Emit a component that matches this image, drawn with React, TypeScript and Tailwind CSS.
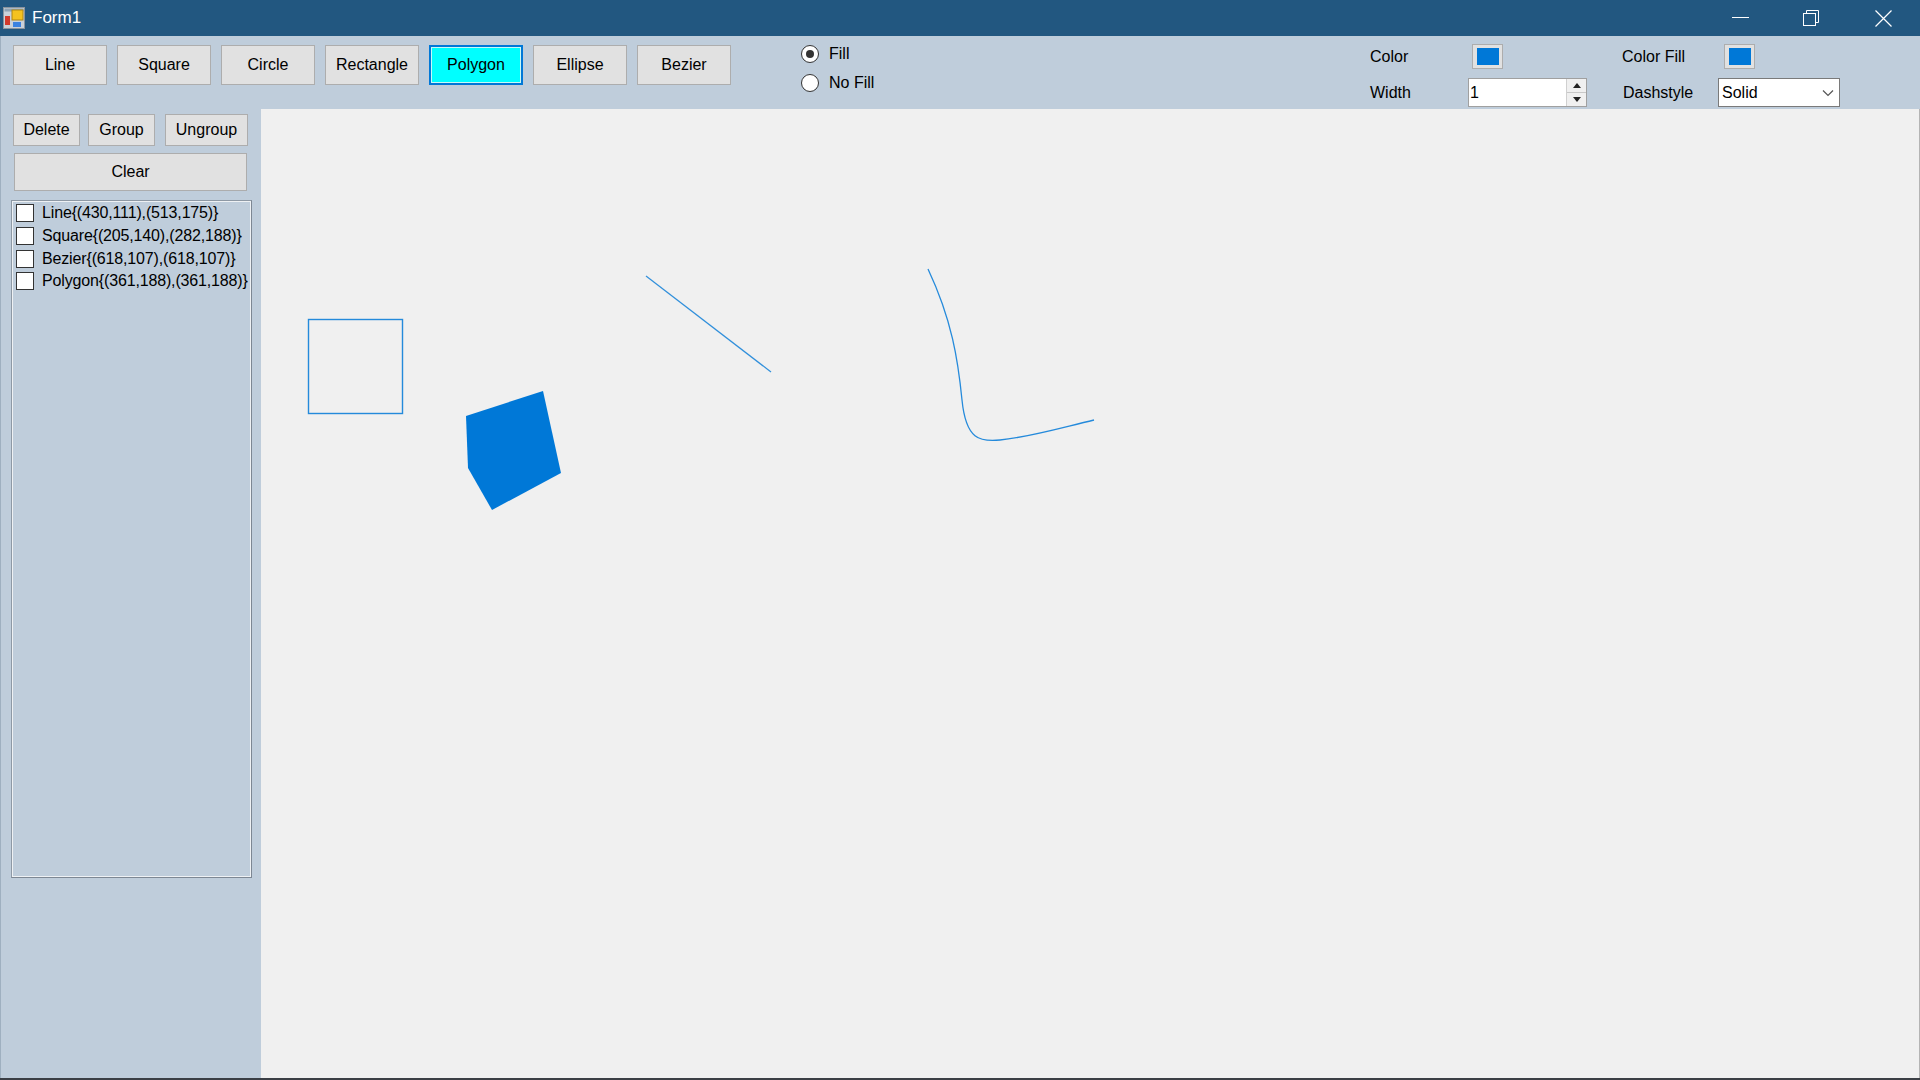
import React from 'react';

const tools = ['Line', 'Square', 'Circle', 'Rectangle', 'Polygon', 'Ellipse', 'Bezier'];

const shapes = [
    'Line{(430,111),(513,175)}',
    'Square{(205,140),(282,188)}',
    'Bezier{(618,107),(618,107)}',
    'Polygon{(361,188),(361,188)}',
];

const btn = 'flex items-center justify-center bg-[#e1e1e1] border border-[#adadad] text-black text-[16px]';

const Radio: React.FC<{ label: string; checked?: boolean }> = ({ label, checked }) => (
    <div className="flex items-center h-[20px]">
        <div className="w-[18px] h-[18px] rounded-full bg-white border border-[#333] flex items-center justify-center">
            {checked && <div className="w-[8px] h-[8px] rounded-full bg-[#333]" />}
        </div>
        <span className="ml-[10px] text-[16px] text-black">{label}</span>
    </div>
);

const Swatch: React.FC = () => (
    <div className="w-[31px] h-[25px] bg-[#e1e1e1] border border-[#adadad] flex items-center justify-center">
        <div className="w-[22px] h-[17px] bg-[#0078d7]" />
    </div>
);

export default function App() {
    return (
        <div className="w-[1920px] h-[1080px] flex flex-col overflow-hidden font-['Liberation_Sans',Arial,sans-serif] bg-[#bfcddb]">
            {/* Title bar */}
            <div className="h-[36px] bg-[#225780] flex items-center text-white shrink-0">
                <svg className="ml-[3px]" width="22" height="22" viewBox="0 0 22 22">
                    <rect x="0.5" y="0.5" width="21" height="21" fill="#c9d1d9" stroke="#8a949e" />
                    <rect x="1.5" y="1.5" width="19" height="3" fill="#8ea2b4" />
                    <rect x="9" y="3" width="11" height="10" fill="#f4c21f" stroke="#b08610" />
                    <rect x="2" y="9" width="5" height="9" fill="#d23a2c" />
                    <rect x="10" y="15" width="8" height="5" fill="#3b82e0" />
                </svg>
                <span className="ml-[7px] text-[17px]">Form1</span>
                <div className="ml-auto flex items-center h-full">
                    <svg className="mr-[53px]" width="18" height="18" viewBox="0 0 18 18">
                        <line x1="0" y1="8.5" x2="17" y2="8.5" stroke="white" strokeWidth="1" />
                    </svg>
                    <svg className="mr-[55px]" width="17" height="17" viewBox="0 0 17 17">
                        <rect x="0.5" y="3.5" width="12" height="12" fill="none" stroke="white" />
                        <path d="M3.5 3.5 V0.5 H15.5 V12.5 H12.5" fill="none" stroke="white" />
                    </svg>
                    <svg className="mr-[28px]" width="17" height="17" viewBox="0 0 17 17">
                        <path d="M0.5 0.5 L16.5 16.5 M16.5 0.5 L0.5 16.5" stroke="white" strokeWidth="1.2" />
                    </svg>
                </div>
            </div>

            {/* Toolbar */}
            <div className="h-[73px] flex items-start shrink-0 border-l border-[#9fb0c0]">
                <div className="flex gap-[10px] ml-[12px] mt-[9px]">
                    {tools.map((t) =>
                        t === 'Polygon' ? (
                            <div key={t} className="w-[94px] h-[40px] border-2 border-[#0078d7] bg-[#00ffff] flex items-center justify-center text-[16px] text-black">
                                <div className="w-full h-full border border-[#c8f8f8] flex items-center justify-center">{t}</div>
                            </div>
                        ) : (
                            <div key={t} className={`${btn} w-[94px] h-[40px]`}>{t}</div>
                        )
                    )}
                </div>
                <div className="flex flex-col gap-[9px] ml-[70px] mt-[8px]">
                    <Radio label="Fill" checked />
                    <Radio label="No Fill" />
                </div>
                <div className="ml-auto mr-[80px] flex flex-col text-[16px] text-black">
                    <div className="flex items-center h-[25px] mt-[8px]">
                        <span className="w-[102px]">Color</span>
                        <Swatch />
                        <span className="w-[119px]" />
                        <span className="w-[102px]">Color Fill</span>
                        <Swatch />
                    </div>
                    <div className="flex items-center h-[29px] mt-[9px]">
                        <span className="w-[98px]">Width</span>
                        <div className="w-[119px] h-[29px] bg-white border border-[#a0a0a0] flex items-center">
                            <span className="pl-[1px] flex-1">1</span>
                            <div className="w-[20px] h-full flex flex-col border-l border-[#d0d0d0] bg-[#f0f0f0]">
                                <div className="flex-1 flex items-center justify-center border-b border-[#c8c8c8]">
                                    <svg width="8" height="5" viewBox="0 0 8 5"><path d="M0 5 L4 0 L8 5 Z" fill="#222" /></svg>
                                </div>
                                <div className="flex-1 flex items-center justify-center">
                                    <svg width="8" height="5" viewBox="0 0 8 5"><path d="M0 0 L4 5 L8 0 Z" fill="#222" /></svg>
                                </div>
                            </div>
                        </div>
                        <span className="w-[36px]" />
                        <span className="w-[95px]">Dashstyle</span>
                        <div className="w-[122px] h-[29px] bg-white border border-[#7a7a7a] flex items-center">
                            <span className="pl-[3px] flex-1">Solid</span>
                            <svg className="mr-[5px]" width="12" height="8" viewBox="0 0 12 8">
                                <path d="M1 1.5 L6 6.5 L11 1.5" fill="none" stroke="#555" strokeWidth="1.2" />
                            </svg>
                        </div>
                    </div>
                </div>
            </div>

            {/* Body */}
            <div className="flex-1 flex min-h-0">
                <div className="w-[261px] shrink-0 flex flex-col border-l border-[#9fb0c0] pt-[5px]">
                    <div className="flex">
                        <div className={`${btn} ml-[12px] w-[67px] h-[32px]`}>Delete</div>
                        <div className={`${btn} ml-[8px] w-[67px] h-[32px]`}>Group</div>
                        <div className={`${btn} ml-[10px] w-[83px] h-[32px]`}>Ungroup</div>
                    </div>
                    <div className={`${btn} ml-[13px] mt-[7px] w-[233px] h-[38px]`}>Clear</div>
                    <div className="ml-[10px] mt-[9px] w-[241px] h-[678px] border border-[#8e99a5] border-r-[#7d8793] border-b-[#7d8793]">
                        <div className="w-full h-full border border-[#eef1f4]">
                            {shapes.map((s) => (
                                <div key={s} className="flex items-center h-[22.67px] text-[16px] text-black tracking-[-0.15px] whitespace-nowrap">
                                    <div className="ml-[3px] w-[18px] h-[18px] bg-white border border-[#333]" />
                                    <span className="ml-[8px]">{s}</span>
                                </div>
                            ))}
                        </div>
                    </div>
                </div>

                {/* Canvas */}
                <div className="flex-1 relative bg-[#f0f0f0] border-r border-[#b4b4b4]">
                    <svg className="absolute inset-0" width="100%" height="100%">
                        <g transform="translate(-261,-109)">
                            <rect x="308.5" y="319.5" width="94" height="94" fill="none" stroke="#0078d7" strokeWidth="1.4" opacity="0.85" />
                            <polygon points="466,416 543,391 561,473 492,510 468,468" fill="#0078d7" />
                            <line x1="646" y1="276" x2="771" y2="372" stroke="#0078d7" strokeWidth="1.2" opacity="0.8" />
                            <path
                                d="M928 269 C952 320, 958 360, 962 400 C966 440, 980 442, 1000 440 C1030 437, 1060 428, 1094 420"
                                fill="none"
                                stroke="#0078d7"
                                strokeWidth="1.3"
                                opacity="0.85"
                            />
                        </g>
                    </svg>
                </div>
            </div>
            <div className="h-[2px] bg-[#3b3f45] shrink-0" />
        </div>
    );
}
